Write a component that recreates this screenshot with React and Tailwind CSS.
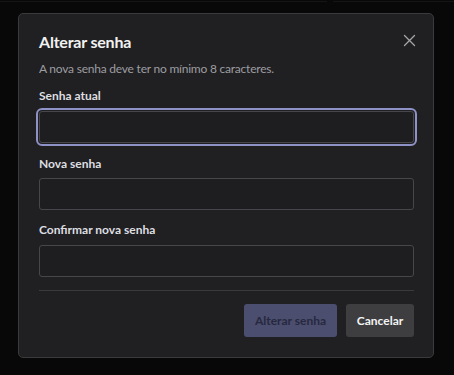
import React from "react";

function Label({ children, className }) {
  return (
    <label className={"block text-[12px] leading-[16px] font-bold text-[#dedee0] " + className}>{children}</label>
  );
}

export default function App() {
  const font = { fontFamily: 'Lato, "Noto Sans", sans-serif' };
  return (
    <div className="min-h-[375px] w-[454px] bg-[#080808] overflow-hidden" style={font}>
      <div className="flex h-[2px] gap-[6px]">
        <div className="w-[327px] border-b border-[#151515]"></div>
        <div className="flex-1 border-b border-[#151515]"></div>
      </div>
      <div className="ml-[18px] mt-[11px] w-[416px] h-[345px] rounded-[5px] border border-[#3a3a3d] bg-[#202022] pl-[20px] pr-[19px] pt-[18px]">
        <div className="flex items-start justify-between">
          <h2 className="text-[16px] leading-[20px] font-bold text-[#f2f2f2] tracking-[-0.2px]">Alterar senha</h2>
          <svg width="13" height="13" viewBox="0 0 13 13" className="mt-[2px] mr-[-2px]">
            <path d="M1.5 1.5 L11.5 11.5 M11.5 1.5 L1.5 11.5" stroke="#a6a6aa" strokeWidth="1.3" strokeLinecap="round" />
          </svg>
        </div>
        <p className="mt-[9px] text-[12px] leading-[16px] tracking-[-0.22px] text-[#9d9da1]">A nova senha deve ter no mínimo 8 caracteres.</p>

        <Label className="mt-[11px]">Senha atual</Label>
        <div className="mt-[4px] -mx-[3px] rounded-[6px] border-2 border-[#8f92c6] p-[1px]">
          <div className="h-[32px] rounded-[3px] border border-[#47474b] bg-[#1e1e20]"></div>
        </div>

        <Label className="mt-[10px]">Nova senha</Label>
        <div className="mt-[6px] h-[32px] rounded-[3px] border border-[#47474b] bg-[#1e1e20]"></div>

        <Label className="mt-[12px]">Confirmar nova senha</Label>
        <div className="mt-[7px] h-[32px] rounded-[3px] border border-[#47474b] bg-[#1e1e20]"></div>

        <div className="mt-[13px] border-t border-[#3a3a3d]"></div>

        <div className="mt-[13px] flex justify-end gap-[9px]">
          <button className="h-[33px] w-[93px] rounded-[3px] bg-[#4b4e6e] text-[12px] font-bold text-[#272840]">Alterar senha</button>
          <button className="h-[33px] w-[68px] rounded-[3px] bg-[#3e3e41] text-[12px] font-bold text-[#f4f4f4]">Cancelar</button>
        </div>
      </div>
    </div>
  );
}
